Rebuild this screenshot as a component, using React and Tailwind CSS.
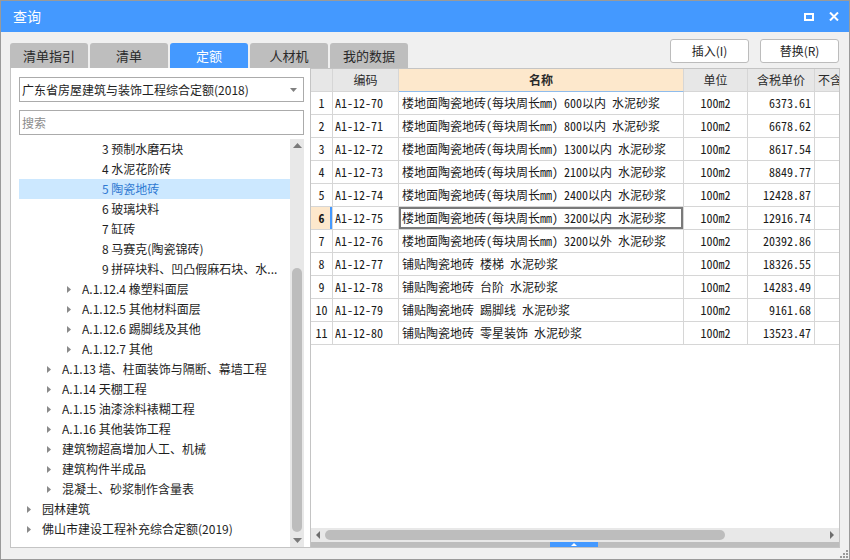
import React from 'react';

const tabs = ['清单指引', '清单', '定额', '人材机', '我的数据'];

const tree = [
  { l: 3, t: '3 预制水磨石块' },
  { l: 3, t: '4 水泥花阶砖' },
  { l: 3, t: '5 陶瓷地砖', sel: true },
  { l: 3, t: '6 玻璃块料' },
  { l: 3, t: '7 缸砖' },
  { l: 3, t: '8 马赛克(陶瓷锦砖)' },
  { l: 3, t: '9 拼碎块料、凹凸假麻石块、水...' },
  { l: 2, t: 'A.1.12.4 橡塑料面层', a: true },
  { l: 2, t: 'A.1.12.5 其他材料面层', a: true },
  { l: 2, t: 'A.1.12.6 踢脚线及其他', a: true },
  { l: 2, t: 'A.1.12.7 其他', a: true },
  { l: 1, t: 'A.1.13 墙、柱面装饰与隔断、幕墙工程', a: true },
  { l: 1, t: 'A.1.14 天棚工程', a: true },
  { l: 1, t: 'A.1.15 油漆涂料裱糊工程', a: true },
  { l: 1, t: 'A.1.16 其他装饰工程', a: true },
  { l: 1, t: '建筑物超高增加人工、机械', a: true },
  { l: 1, t: '建筑构件半成品', a: true },
  { l: 1, t: '混凝土、砂浆制作含量表', a: true },
  { l: 0, t: '园林建筑', a: true },
  { l: 0, t: '佛山市建设工程补充综合定额(2019)', a: true },
];

const levelPad = { 0: 'pl-[8px]', 1: 'pl-[28px]', 2: 'pl-[48px]', 3: 'pl-[68px]' };

const rows = [
  ['1', 'A1-12-70', '楼地面陶瓷地砖(每块周长mm) 600以内 水泥砂浆', '100m2', '6373.61'],
  ['2', 'A1-12-71', '楼地面陶瓷地砖(每块周长mm) 800以内 水泥砂浆', '100m2', '6678.62'],
  ['3', 'A1-12-72', '楼地面陶瓷地砖(每块周长mm) 1300以内 水泥砂浆', '100m2', '8617.54'],
  ['4', 'A1-12-73', '楼地面陶瓷地砖(每块周长mm) 2100以内 水泥砂浆', '100m2', '8849.77'],
  ['5', 'A1-12-74', '楼地面陶瓷地砖(每块周长mm) 2400以内 水泥砂浆', '100m2', '12428.87'],
  ['6', 'A1-12-75', '楼地面陶瓷地砖(每块周长mm) 3200以内 水泥砂浆', '100m2', '12916.74'],
  ['7', 'A1-12-76', '楼地面陶瓷地砖(每块周长mm) 3200以外 水泥砂浆', '100m2', '20392.86'],
  ['8', 'A1-12-77', '铺贴陶瓷地砖 楼梯 水泥砂浆', '100m2', '18326.55'],
  ['9', 'A1-12-78', '铺贴陶瓷地砖 台阶 水泥砂浆', '100m2', '14283.49'],
  ['10', 'A1-12-79', '铺贴陶瓷地砖 踢脚线 水泥砂浆', '100m2', '9161.68'],
  ['11', 'A1-12-80', '铺贴陶瓷地砖 零星装饰 水泥砂浆', '100m2', '13523.47'],
];

const Arrow = () => (
  <svg width="4" height="7" viewBox="0 0 4 7"><path d="M0 0L4 3.5L0 7Z" fill="#8a8a8a" /></svg>
);

const cell = 'h-full border-r border-b border-[#d6d6d6] flex items-center overflow-hidden whitespace-pre';
const grid = 'grid grid-cols-[22px_66px_285px_64px_67px_67px] h-[23px] w-[571px]';

export default function App() {
  return (
    <div className="w-[850px] h-[560px] border border-[#9a9a9a] bg-[#f0f0f0] flex flex-col font-['Noto_Sans_CJK_SC',sans-serif] text-[#1e1e1e] overflow-hidden">
      {/* title bar */}
      <div className="h-[31px] shrink-0 bg-[#4499ff] flex items-center pl-[12px] pr-[10px]">
        <span className="text-white text-[14px]">查询</span>
        <div className="ml-auto flex items-center gap-[15px]">
          <div className="w-[10px] h-[8px] border-2 border-white" />
          <svg width="10" height="9" viewBox="0 0 10 9">
            <path d="M1 0.5L9 8.5M9 0.5L1 8.5" stroke="white" strokeWidth="2" />
          </svg>
        </div>
      </div>

      {/* toolbar */}
      <div className="h-[36px] shrink-0 flex pl-[9px] pr-[10px]">
        <div className="self-end flex gap-[2px]">
          {tabs.map((t, i) => (
            <div
              key={t}
              className={
                'w-[78px] h-[25px] rounded-t-[3px] flex items-center justify-center text-[13px] ' +
                (i === 2 ? 'bg-[#4499ff] text-white' : 'bg-[#bebebe] text-[#2a2a2a]')
              }
            >
              {t}
            </div>
          ))}
        </div>
        <div className="ml-auto mt-[7px] flex gap-[11px]">
          <div className="w-[79px] h-[24px] border border-[#bcbcbc] rounded-[3px] bg-white text-[12px] flex items-center justify-center">插入(I)</div>
          <div className="w-[79px] h-[24px] border border-[#bcbcbc] rounded-[3px] bg-white text-[12px] flex items-center justify-center">替换(R)</div>
        </div>
      </div>

      {/* content */}
      <div className="h-[480px] shrink-0 mx-[9px] flex">
        {/* left panel */}
        <div className="w-[300px] h-full bg-white border-l border-b border-[#c4c4c4] flex flex-col pl-[8px] pr-[5px] pt-[9px]">
          <div className="h-[25px] w-[285px] border border-[#ababab] flex items-center pl-[2px] pr-[6px] text-[12px]">
            <span>广东省房屋建筑与装饰工程综合定额(2018)</span>
            <svg className="ml-auto" width="7" height="4" viewBox="0 0 7 4"><path d="M0 0H7L3.5 4Z" fill="#808080" /></svg>
          </div>
          <div className="h-[25px] w-[285px] mt-[8px] border border-[#ababab] flex items-center pl-[2px] text-[12px] text-[#8c8c8c]">搜索</div>
          <div className="mt-[4px] flex-1 flex w-[285px] min-h-0">
            <div className="flex-1 flex flex-col">
              {tree.map((n, i) => (
                <div
                  key={i}
                  className={
                    'h-[20px] shrink-0 flex items-center text-[12px] whitespace-nowrap ' +
                    levelPad[n.l] +
                    (n.sel ? ' bg-[#cce8ff] text-[#2f7ad2]' : '')
                  }
                >
                  <div className="w-[15px] flex items-center">{n.a ? <Arrow /> : null}</div>
                  <span>{n.t}</span>
                </div>
              ))}
            </div>
            <div className="w-[14px] h-full bg-[#e8e8e8] flex flex-col">
              <div className="h-[14px] flex justify-center pt-[4px]">
                <svg width="9" height="5" viewBox="0 0 9 5"><path d="M0 5L4.5 0L9 5Z" fill="#7a7a7a" /></svg>
              </div>
              <div className="flex-1 px-[2px]">
                <div className="mt-[115px] h-[264px] rounded-full bg-[#bdbdbd]" />
              </div>
              <div className="h-[14px] flex justify-center pt-[5px]">
                <svg width="9" height="5" viewBox="0 0 9 5"><path d="M0 0L4.5 5L9 0Z" fill="#7a7a7a" /></svg>
              </div>
            </div>
          </div>
        </div>

        {/* right panel */}
        <div className="flex-1 h-full bg-white border border-[#c4c4c4] flex flex-col overflow-hidden font-['Noto_Sans_Mono_CJK_SC','Noto_Sans_CJK_SC',monospace]">
          <div className={grid + ' shrink-0 bg-[#e7e7e7] text-[12px] text-[#2a2a2a] font-["Noto_Sans_CJK_SC",sans-serif]'}>
            <div className={cell + ' border-[#cfcfcf]'} />
            <div className={cell + ' justify-center border-[#cfcfcf]'}>编码</div>
            <div className={cell + ' justify-center bg-[#fde8cc] font-bold border-[#cfcfcf] border-b-[#8fbcec]'}>名称</div>
            <div className={cell + ' justify-center border-[#cfcfcf]'}>单位</div>
            <div className={cell + ' justify-center border-[#cfcfcf]'}>含税单价</div>
            <div className={cell + ' justify-center border-[#cfcfcf]'}>不含税单价</div>
          </div>
          {rows.map((r) => {
            const act = r[0] === '6';
            return (
              <div key={r[0]} className={grid + ' shrink-0 text-[12px] text-[#1a1a1a]'}>
                <div className={cell + ' justify-center' + (act ? ' bg-[#fde8cc] font-bold shadow-[inset_-2px_0_0_#4499ff]' : '')}>{r[0]}</div>
                <div className={cell + ' pl-[2px]'}>{r[1]}</div>
                <div className={cell + ' pl-[3px]' + (act ? ' shadow-[inset_0_0_0_2px_#7a7a7a]' : '')}>{r[2]}</div>
                <div className={cell + ' justify-center'}>{r[3]}</div>
                <div className={cell + ' justify-end pr-[3px]'}>{r[4]}</div>
                <div className={cell} />
              </div>
            );
          })}
          <div className="flex-1" />
          <div className="h-[14px] shrink-0 bg-[#e8e8e8] flex items-center">
            <div className="w-[14px] flex justify-center">
              <svg width="4" height="8" viewBox="0 0 4 8"><path d="M4 0L0 4L4 8Z" fill="#6e6e6e" /></svg>
            </div>
            <div className="w-[400px] h-[10px] rounded-full bg-[#bdbdbd]" />
            <div className="flex-1" />
            <div className="w-[14px] flex justify-center">
              <svg width="4" height="8" viewBox="0 0 4 8"><path d="M0 0L4 4L0 8Z" fill="#6e6e6e" /></svg>
            </div>
          </div>
          <div className="h-[5px] shrink-0 bg-[#bdbdbd] flex">
            <div className="ml-[239px] w-[48px] h-full bg-[#4499ff] flex items-center justify-center">
              <svg width="6" height="3" viewBox="0 0 6 3"><path d="M0 3L3 0L6 3Z" fill="white" /></svg>
            </div>
          </div>
        </div>
      </div>

      {/* bottom */}
      <div className="flex-1 flex justify-end items-end pr-[1px] pb-[1px]">
        <svg width="8" height="8" viewBox="0 0 8 8" fill="#9a9a9a">
          <rect x="6" y="0" width="2" height="2" />
          <rect x="3" y="3" width="2" height="2" />
          <rect x="6" y="3" width="2" height="2" />
          <rect x="0" y="6" width="2" height="2" />
          <rect x="3" y="6" width="2" height="2" />
          <rect x="6" y="6" width="2" height="2" />
        </svg>
      </div>
    </div>
  );
}
